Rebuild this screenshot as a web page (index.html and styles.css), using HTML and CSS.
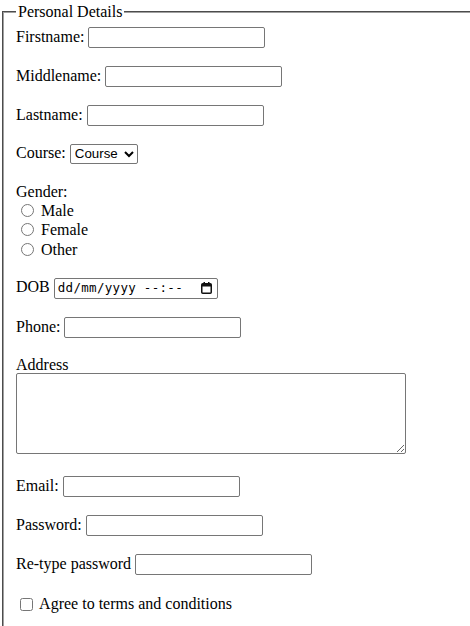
FILE: index.html
```html
<!DOCTYPE html>
<html>
<head>
<meta charset="utf-8">
<title>Registration</title>
<link rel="stylesheet" href="styles.css">
</head>
<body>
<form class="form">
  <fieldset class="box">
    <legend class="legend">Personal Details</legend>
    <div class="row"><label>Firstname:</label> <input class="txt" type="text"></div>
    <div class="row"><label>Middlename:</label> <input class="txt" type="text"></div>
    <div class="row"><label>Lastname:</label> <input class="txt" type="text"></div>
    <div class="row course-row"><label>Course:</label> <select class="sel"><option>Course</option></select></div>
    <div class="row group">
      <div class="head">Gender:</div>
      <div class="line"><input class="radio" type="radio" name="g"> Male</div>
      <div class="line"><input class="radio" type="radio" name="g"> Female</div>
      <div class="line"><input class="radio" type="radio" name="g"> Other</div>
    </div>
    <div class="row"><label>DOB</label> <span class="dob"><span class="dob-text">dd/mm/yyyy --:--</span><svg class="cal" width="11" height="12" viewBox="0 0 11 12"><rect x="0.75" y="1.75" width="9.5" height="9.5" rx="1" fill="none" stroke="#111" stroke-width="1.5"/><rect x="1" y="2" width="9" height="2.5" fill="#111"/><rect x="2.5" y="0" width="1.5" height="2" fill="#111"/><rect x="7" y="0" width="1.5" height="2" fill="#111"/></svg></span></div>
    <div class="row"><label>Phone:</label> <input class="txt" type="text"></div>
    <div class="row area-row">
      <div class="head">Address</div>
      <textarea class="area"></textarea>
    </div>
    <div class="row"><label>Email:</label> <input class="txt" type="text"></div>
    <div class="row"><label>Password:</label> <input class="txt" type="password"></div>
    <div class="row"><label>Re-type password</label> <input class="txt" type="password"></div>
    <div class="row check-row"><input class="check" type="checkbox"> Agree to terms and conditions</div>
  </fieldset>
</form>
</body>
</html>
```
FILE: styles.css
```css
html {
  overflow: hidden;
}
body {
  margin: 0;
  font-family: "Liberation Serif", "Times New Roman", serif;
  font-size: 16px;
  color: #000;
  background: #fff;
}
.form {
  margin: 0;
  padding-top: 3px;
}
.box {
  margin: 0 2px;
  padding: 6px 12px 10px;
  border: 2px groove #a0a0a0;
  min-width: 0;
  width: 520px;
}
.legend {
  padding: 0 2px;
}
.row {
  margin-bottom: 18px;
  line-height: 20px;
}
.course-row {
  margin-top: -1px;
  margin-bottom: 19px;
}
.head {
  line-height: 18px;
}
.line {
  height: 19.5px;
  line-height: 19.5px;
}
.txt {
  box-sizing: border-box;
  width: 177px;
  height: 21px;
  margin: 0;
  padding: 1px 2px;
  border: 1px solid #767676;
  border-radius: 2px;
  font-family: "Liberation Sans", Arial, sans-serif;
  font-size: 13.33px;
  vertical-align: baseline;
}
.sel {
  box-sizing: border-box;
  width: 68px;
  height: 20px;
  margin: 0;
  font-family: "Liberation Sans", Arial, sans-serif;
  font-size: 13.33px;
  border: 1px solid #767676;
  border-radius: 2px;
  background: #fff;
  color: #000;
}
.radio {
  margin: 0 3px 0 5px;
  width: 13px;
  height: 13px;
  vertical-align: -1px;
}
.dob {
  box-sizing: border-box;
  display: inline-flex;
  align-items: center;
  width: 164px;
  height: 21px;
  padding: 0 5px 0 3px;
  border: 1px solid #767676;
  border-radius: 2px;
  font-family: "DejaVu Sans Mono", "Liberation Mono", monospace;
  font-size: 12.5px;
  vertical-align: baseline;
  justify-content: space-between;
  color: #000;
}
.dob-text {
  white-space: pre;
  letter-spacing: 0.3px;
}
.cal {
  display: block;
}
.area {
  display: block;
  box-sizing: border-box;
  width: 390px;
  height: 81px;
  margin: -1px 0 0;
  border: 1px solid #767676;
  border-radius: 2px;
  resize: both;
}
.area-row {
  margin-bottom: 22px;
}
.check {
  margin: 3px 3px 3px 4px;
  width: 13px;
  height: 13px;
  vertical-align: -2px;
}
.check-row {
  margin-top: 19px;
}
```
